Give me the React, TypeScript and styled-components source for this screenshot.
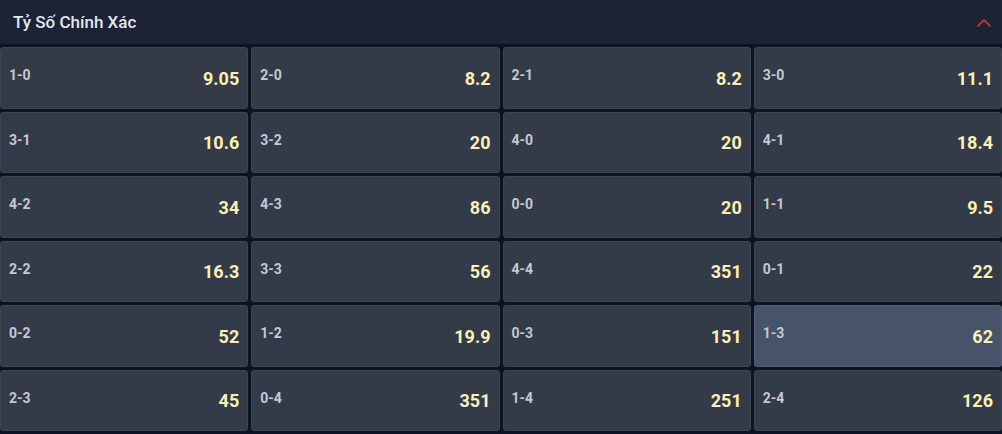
import styled, { createGlobalStyle } from "styled-components";

const GlobalStyle = createGlobalStyle`
  html, body {
    margin: 0;
    padding: 0;
    background: #0c1423;
  }
  body {
    font-family: Roboto, "Liberation Sans", Arial, sans-serif;
  }
`;

type Odd = { score: string; value: string; active?: boolean };

const odds: Odd[] = [
  { score: "1-0", value: "9.05" },
  { score: "2-0", value: "8.2" },
  { score: "2-1", value: "8.2" },
  { score: "3-0", value: "11.1" },
  { score: "3-1", value: "10.6" },
  { score: "3-2", value: "20" },
  { score: "4-0", value: "20" },
  { score: "4-1", value: "18.4" },
  { score: "4-2", value: "34" },
  { score: "4-3", value: "86" },
  { score: "0-0", value: "20" },
  { score: "1-1", value: "9.5" },
  { score: "2-2", value: "16.3" },
  { score: "3-3", value: "56" },
  { score: "4-4", value: "351" },
  { score: "0-1", value: "22" },
  { score: "0-2", value: "52" },
  { score: "1-2", value: "19.9" },
  { score: "0-3", value: "151" },
  { score: "1-3", value: "62", active: true },
  { score: "2-3", value: "45" },
  { score: "0-4", value: "351" },
  { score: "1-4", value: "251" },
  { score: "2-4", value: "126" },
];

function App() {
  return (
    <Panel>
      <GlobalStyle />
      <Header>
        <Title>Tỷ Số Chính Xác</Title>
        <Chevron width="16" height="10" viewBox="0 0 16 10">
          <polyline points="1.5,8.5 8,2 14.5,8.5" />
        </Chevron>
      </Header>
      <Grid>
        {odds.map((o) => (
          <Cell key={o.score} $active={o.active}>
            <Score>{o.score}</Score>
            <Price>{o.value}</Price>
          </Cell>
        ))}
      </Grid>
    </Panel>
  );
}

const Panel = styled.div`
  width: 1002px;
  height: 434px;
  background: #0c1423;
  overflow: hidden;
`;

const Header = styled.div`
  height: 44px;
  background: #1b2334;
  display: flex;
  align-items: center;
  justify-content: space-between;
  padding: 0 10px 0 13px;
  box-sizing: border-box;
`;

const Title = styled.div`
  color: #e3e7ee;
  font-size: 17px;
  font-weight: 500;
  margin-top: -1px;
`;

const Chevron = styled.svg`
  fill: none;
  stroke: #e8302e;
  stroke-width: 1.6;
  margin-top: 2px;
`;

const Grid = styled.div`
  display: grid;
  grid-template-columns: repeat(4, 1fr);
  grid-auto-rows: 61.5px;
  gap: 3px;
  padding-top: 3px;
`;

const Cell = styled.div<{ $active?: boolean }>`
  display: flex;
  align-items: center;
  justify-content: space-between;
  padding: 0 8px;
  border: 1px solid ${(p) => (p.$active ? "#51607a" : "#3d4452")};
  border-radius: 3px;
  background: ${(p) => (p.$active ? "#465369" : "#343b48")};
  box-sizing: border-box;
`;

const Score = styled.span`
  color: #c4c9d2;
  font-size: 14px;
  font-weight: 700;
  margin-top: -5px;
`;

const Price = styled.span`
  color: #fbf0b4;
  font-size: 18px;
  font-weight: 700;
  margin-top: 1px;
`;

export default App;
